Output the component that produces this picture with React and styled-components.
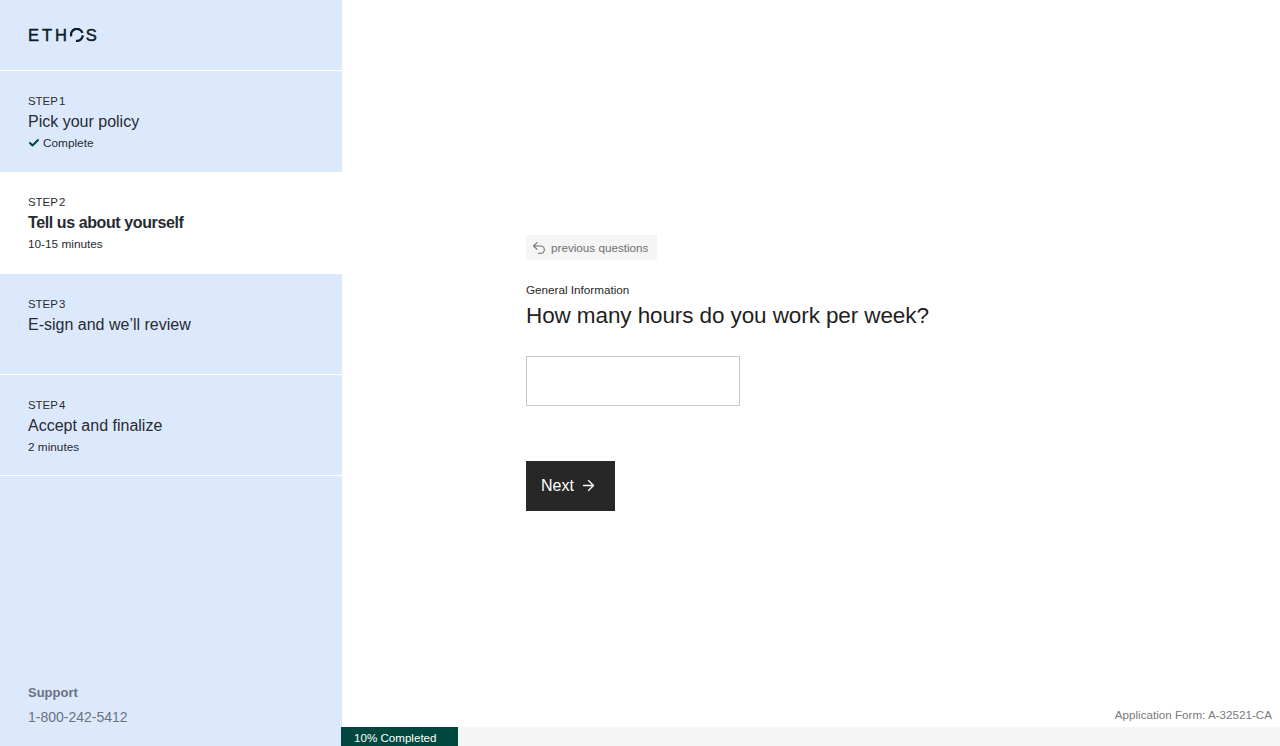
import React from "react";
import styled, { createGlobalStyle } from "styled-components";
import { ArrowRight, Check, Undo2 } from "lucide-react";

const GlobalStyle = createGlobalStyle`
  html, body {
    margin: 0;
    height: 100%;
    background: #fff;
    font-family: "Liberation Sans", Arial, sans-serif;
    color: #272727;
  }
  #root {
    height: 100%;
  }
  * {
    box-sizing: border-box;
  }
`;

const steps = [
  { id: 1, label: "STEP 1", title: "Pick your policy", note: "Complete", done: true, height: 101, noLine: true },
  { id: 2, label: "STEP 2", title: "Tell us about yourself", note: "10-15 minutes", active: true, height: 102 },
  { id: 3, label: "STEP 3", title: "E-sign and we’ll review", height: 101 },
  { id: 4, label: "STEP 4", title: "Accept and finalize", note: "2 minutes", height: 101 },
];

const App = () => {
  return (
    <Page>
      <GlobalStyle />
      <Sidebar>
        <LogoBar>
          <Logo>
            ETH
            <LogoO viewBox="0 0 14 14" aria-hidden="true">
              <path d="M1.3 8.4A5.8 5.8 0 0 1 12.4 4.8" fill="none" stroke="#0d1b2a" strokeWidth="2.3" />
              <path d="M12.8 7.4A5.8 5.8 0 0 1 6 12.8" fill="none" stroke="#0d1b2a" strokeWidth="2.3" />
            </LogoO>
            S
          </Logo>
        </LogoBar>
        {steps.map((step) => (
          <Step key={step.id} $active={step.active} $height={step.height} $noLine={step.noLine}>
            <StepLabel>{step.label}</StepLabel>
            <StepTitle $active={step.active}>{step.title}</StepTitle>
            {step.note && (
              <StepNote>
                {step.done && <Check size={12} strokeWidth={4} color="#00483e" />}
                {step.note}
              </StepNote>
            )}
          </Step>
        ))}
        <Support>
          <SupportTitle>Support</SupportTitle>
          <SupportPhone>1-800-242-5412</SupportPhone>
        </Support>
      </Sidebar>
      <Main>
        <Question>
          <BackButton>
            <Undo2 size={16} strokeWidth={1.6} color="#6f6f6f" />
            previous questions
          </BackButton>
          <Section>General Information</Section>
          <Heading>How many hours do you work per week?</Heading>
          <Field type="text" />
          <NextButton>
            Next
            <ArrowRight size={17} strokeWidth={1.8} />
          </NextButton>
        </Question>
        <FormId>Application Form: A-32521-CA</FormId>
        <ProgressTrack>
          <ProgressFill style={{ width: "117px" }}>10% Completed</ProgressFill>
        </ProgressTrack>
      </Main>
    </Page>
  );
};

export default App;

const Page = styled.div`
  display: grid;
  grid-template-columns: 342px 1fr;
  height: 746px;
  overflow: hidden;
`;

const Sidebar = styled.aside`
  display: flex;
  flex-direction: column;
  background-color: #dce9fd;
`;

const LogoBar = styled.div`
  display: flex;
  align-items: center;
  height: 71px;
  padding: 0 28px;
  border-bottom: 1px solid #fff;
`;

const Logo = styled.div`
  display: flex;
  align-items: center;
  font-size: 16.5px;
  line-height: 16px;
  font-weight: 400;
  letter-spacing: 2.9px;
  color: #0d1b2a;
  -webkit-text-stroke: 0.5px #0d1b2a;
`;

const LogoO = styled.svg`
  width: 14px;
  height: 14px;
  margin-right: 2px;
`;

const Step = styled.div`
  height: ${(props) => props.$height}px;
  padding: 23px 28px 0;
  background-color: ${(props) => (props.$active ? "#fff" : "transparent")};
  border-bottom: 1px solid ${(props) => (props.$noLine ? "transparent" : "#fff")};
  color: #272b33;
`;

const StepLabel = styled.div`
  font-size: 11.4px;
  line-height: 14px;
  word-spacing: -1.6px;
`;

const StepTitle = styled.div`
  margin-top: 4px;
  font-size: 16px;
  line-height: 20px;
  font-weight: ${(props) => (props.$active ? 700 : 400)};
  letter-spacing: ${(props) => (props.$active ? "-0.4px" : "0")};
`;

const StepNote = styled.div`
  display: flex;
  align-items: center;
  gap: 3px;
  margin-top: 4px;
  font-size: 11.8px;
  line-height: 14px;
`;

const Support = styled.div`
  margin-top: auto;
  padding: 0 28px 21px;
  color: #6b7280;
`;

const SupportTitle = styled.div`
  font-size: 13px;
  line-height: 16px;
  font-weight: 700;
`;

const SupportPhone = styled.div`
  margin-top: 8px;
  font-size: 14px;
  line-height: 16px;
`;

const Main = styled.main`
  display: flex;
  flex-direction: column;
  min-width: 0;
`;

const Question = styled.div`
  flex: 1;
  display: flex;
  flex-direction: column;
  align-items: flex-start;
  padding: 235px 0 0 184px;
`;

const BackButton = styled.button`
  display: flex;
  align-items: center;
  gap: 4px;
  width: 131px;
  height: 25px;
  padding: 0 0 0 5px;
  border: 0;
  background-color: #f5f5f5;
  font-family: inherit;
  font-size: 11.7px;
  color: #6f6f6f;
`;

const Section = styled.div`
  margin-top: 23px;
  font-size: 11.7px;
  line-height: 14px;
  color: #272727;
`;

const Heading = styled.h1`
  margin: 4px 0 0;
  font-size: 22.5px;
  line-height: 30px;
  font-weight: 400;
  letter-spacing: -0.1px;
  color: #1f1f1f;
  white-space: nowrap;
`;

const Field = styled.input`
  width: 214px;
  height: 50px;
  margin-top: 25px;
  border: 1px solid #c8c8c8;
  background: #fff;
`;

const NextButton = styled.button`
  display: flex;
  align-items: center;
  gap: 6px;
  width: 89px;
  height: 50px;
  margin-top: 55px;
  padding: 0 0 1px 15px;
  border: 0;
  background-color: #272727;
  color: #fff;
  font-family: inherit;
  font-size: 16px;
`;

const FormId = styled.div`
  padding: 0 8px 5px 0;
  text-align: right;
  font-size: 11.65px;
  line-height: 14px;
  color: #7a7a7a;
`;

const ProgressTrack = styled.div`
  height: 19px;
  margin-left: -1px;
  background-color: #f5f5f5;
`;

const ProgressFill = styled.div`
  height: 100%;
  padding-left: 13px;
  background-color: #00483e;
  color: #fff;
  font-size: 11.6px;
  line-height: 22px;
  white-space: nowrap;
`;
